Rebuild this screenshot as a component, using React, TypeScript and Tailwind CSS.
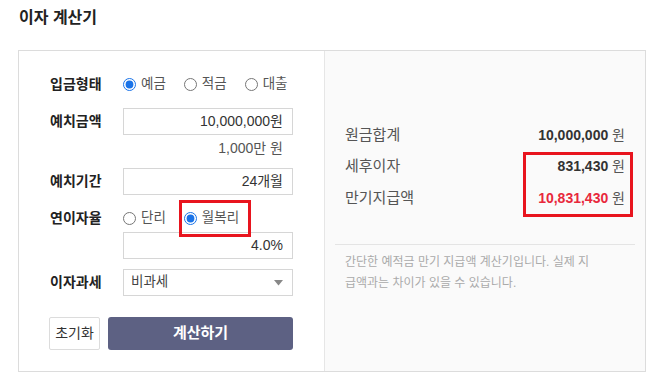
import React from 'react'

const FONT = "font-['Liberation_Sans','Noto_Sans_CJK_KR',sans-serif]"

function Radio({ label, checked, boxed }: { label: string; checked?: boolean; boxed?: boolean }) {
  return (
    <label className="relative flex items-center gap-[5px] text-[13.5px] text-[#555]">
      <input
        type="radio"
        defaultChecked={checked}
        className="m-0 h-[13px] w-[13px] accent-[#1a73e8]"
      />
      <span>{label}</span>
      {boxed && (
        <span className="pointer-events-none absolute left-[-5px] right-[-12px] top-[-8px] bottom-[-9px] border-[3px] border-[#e8141e]" />
      )}
    </label>
  )
}

function Field({ value }: { value: string }) {
  return (
    <div className="flex h-[27px] w-[170px] items-center justify-end border border-[#d6d6d6] bg-white pr-[9px] text-[14px] text-[#333]">
      {value}
    </div>
  )
}

export default function App() {
  return (
    <div className={`${FONT} h-[374px] w-[650px] bg-white px-[18px]`}>
      {/* ── Title ───────────────────── */}
      <h1 className="flex h-[50px] items-start pt-[8px] pl-[1px] text-[16px] font-bold leading-[20px] text-[#222]">
        이자 계산기
      </h1>

      <div className="flex h-[322px] w-[628px] border border-[#dcdcdc]">
        {/* ── Form ───────────────────── */}
        <div className="w-[305px] pl-[31px] pt-[23px]">
          <div className="flex h-[20px] items-center">
            <div className="w-[73px] text-[14px] font-bold text-[#222]">입금형태</div>
            <div className="flex items-center gap-[18px]">
              <Radio label="예금" checked />
              <Radio label="적금" />
              <Radio label="대출" />
            </div>
          </div>

          <div className="mt-[14px] flex items-center">
            <div className="w-[73px] text-[14px] font-bold text-[#222]">예치금액</div>
            <Field value="10,000,000원" />
          </div>
          <div className="mt-[4px] flex h-[18px] w-[243px] items-center justify-end pr-[10px] text-[14px] text-[#555]">
            1,000만 원
          </div>

          <div className="mt-[11px] flex items-center">
            <div className="w-[73px] text-[14px] font-bold text-[#222]">예치기간</div>
            <Field value="24개월" />
          </div>

          <div className="mt-[13px] flex h-[20px] items-center">
            <div className="w-[73px] text-[14px] font-bold text-[#222]">연이자율</div>
            <div className="flex items-center gap-[18px]">
              <Radio label="단리" />
              <Radio label="월복리" checked boxed />
            </div>
          </div>
          <div className="mt-[4px] pl-[73px]">
            <Field value="4.0%" />
          </div>

          <div className="mt-[10px] flex items-center">
            <div className="w-[73px] text-[14px] font-bold text-[#222]">이자과세</div>
            <div className="flex h-[27px] w-[170px] items-center justify-between border border-[#d6d6d6] bg-white pl-[7px] pr-[9px] text-[13.5px] text-[#444]">
              <span>비과세</span>
              <svg width="9" height="6" viewBox="0 0 9 6">
                <path d="M0 0h9L4.5 5.5z" fill="#888" />
              </svg>
            </div>
          </div>

          <div className="-ml-[1px] mt-[21px] flex h-[33px] gap-[8px]">
            <button className="w-[51px] rounded-[2px] border border-[#dcdcdc] bg-white text-[14px] text-[#333]">
              초기화
            </button>
            <button className="w-[185px] rounded-[3px] bg-[#5d6183] text-[15px] font-bold text-white">
              계산하기
            </button>
          </div>
        </div>

        {/* ── Result ───────────────────── */}
        <div className="relative flex-1 border-l border-[#e6e6e6] bg-[#fafafa] px-[10px] pt-[69px]">
          <div className="px-[10px] text-[15px] text-[#555]">
            <div className="flex h-[31px] items-center justify-between">
              <span>원금합계</span>
              <span className="text-[14px]">
                <b className="text-[#333]">10,000,000</b> 원
              </span>
            </div>
            <div className="flex h-[31px] items-center justify-between">
              <span>세후이자</span>
              <span className="text-[14px]">
                <b className="text-[#333]">831,430</b> 원
              </span>
            </div>
            <div className="mt-[1px] flex h-[31px] items-center justify-between">
              <span>만기지급액</span>
              <span className="text-[14px]">
                <b className="text-[#e8283c]">10,831,430</b> 원
              </span>
            </div>
          </div>
          <span className="pointer-events-none absolute left-[198px] top-[101px] h-[65px] w-[110px] border-[3px] border-[#e8141e]" />

          <div className="mt-[30px] border-t border-[#e4e4e4] px-[10px] pt-[7px] text-[12px] leading-[21px] text-[#aaa]">
            간단한 예적금 만기 지급액 계산기입니다. 실제 지<br />
            급액과는 차이가 있을 수 있습니다.
          </div>
        </div>
      </div>
    </div>
  )
}
